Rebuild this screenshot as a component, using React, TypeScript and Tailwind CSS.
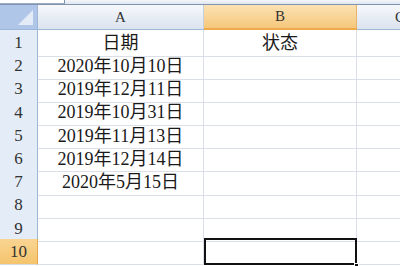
import React from "react";

const rows: string[] = [
  "日期",
  "2020年10月10日",
  "2019年12月11日",
  "2019年10月31日",
  "2019年11月13日",
  "2019年12月14日",
  "2020年5月15日",
  "",
  "",
  "",
];

const serif = { fontFamily: '"Liberation Serif", "Noto Sans CJK SC", serif' };

export default function App() {
  return (
    <div className="w-[400px] h-[266px] overflow-hidden bg-white relative" style={serif}>
      {/* top strip */}
      <div className="h-[5px] flex border-b border-[#8094b0] bg-[#eef2f8]">
        <div className="w-[65px] h-full bg-white border-r border-[#7f93ae] border-b border-b-[#9aabc3]"></div>
        <div className="flex-1 bg-gradient-to-b from-[#f4f6fa] to-[#dfe6f0]"></div>
      </div>
      {/* header row */}
      <div className="grid grid-cols-[38px_166px_153px_1fr] h-[25px]">
        <div className="relative bg-[#b0c6e8] border-r border-b border-[#9eb6d8]">
          <div className="absolute right-[4px] bottom-[4px] w-0 h-0 border-l-[15px] border-l-transparent border-b-[15px] border-b-[#e3ebf6]"></div>
        </div>
        <div className="flex items-center justify-center bg-gradient-to-b from-[#f6f8fb] to-[#dbe3ee] border-r border-[#c5d0df] border-b border-b-[#9eb6d8] text-[15px] text-[#333]">
          A
        </div>
        <div className="flex items-center justify-center bg-gradient-to-b from-[#fbe2b3] to-[#f5c77a] border-r border-[#e8b36a] border-b-2 border-b-[#f0a84d] text-[15px] text-[#333]">
          B
        </div>
        <div className="flex items-center pl-[38px] overflow-hidden bg-gradient-to-b from-[#f6f8fb] to-[#dbe3ee] border-b border-b-[#9eb6d8] text-[15px] text-[#333]">
          C
        </div>
      </div>
      {/* body rows */}
      {rows.map((v, i) => {
        const sel = i === 9;
        return (
          <div key={i} className="grid grid-cols-[38px_166px_153px_1fr] h-[23.2px]">
            <div
              className={
                sel
                  ? "flex items-center justify-center bg-gradient-to-b from-[#f9d592] to-[#f5c46d] border-r border-[#e8a64e] border-b border-b-[#d5dbe5] text-[17px] text-[#333]"
                  : "flex items-center justify-center bg-[#e4ecf7] border-r border-[#9eb6d8] border-b border-b-[#c9d3e2] text-[17px] text-[#333]"
              }
            >
              {i + 1}
            </div>
            <div className="flex items-center justify-center border-r border-b border-[#dadfe8] text-[18px] text-[#1a1a1a] leading-none whitespace-nowrap">
              {v}
            </div>
            <div className="relative flex items-center justify-center border-r border-b border-[#dadfe8] text-[18px] text-[#1a1a1a] leading-none">
              {i === 0 ? "状态" : ""}
              {sel && (
                <>
                  <div className="absolute left-[0px] top-[-1px] right-[-1px] bottom-[-1px] border-[2.5px] border-[#111]"></div>
                  <div className="absolute right-[-3px] bottom-[-4px] w-[5px] h-[5px] bg-[#111] border border-white"></div>
                </>
              )}
            </div>
            <div className="border-b border-[#dadfe8]"></div>
          </div>
        );
      })}
    </div>
  );
}
